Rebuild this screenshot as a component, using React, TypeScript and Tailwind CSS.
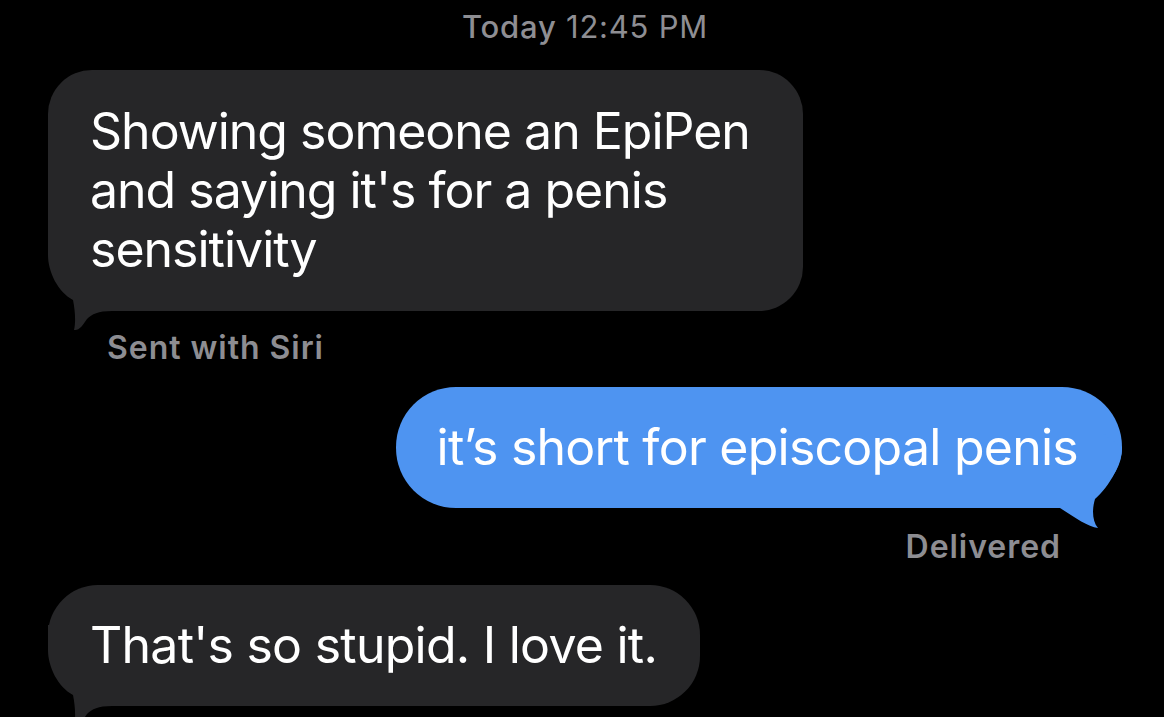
import React from "react";

function GrayTail() {
  return (
    <svg
      className="absolute left-[-8px] bottom-[-29px]"
      width="100"
      height="110"
      viewBox="0 0 100 110"
    >
      <path
        d="M 8 0 L 8 25 C 8 42, 18 62, 33 70 C 35 80, 36 92, 34 100 C 39 101, 43 95, 47 89 C 52 84, 58 81, 72 81 L 100 81 L 100 0 Z"
        fill="#262628"
      />
    </svg>
  );
}

function BlueTail() {
  return (
    <svg
      className="absolute right-[-18px] bottom-[-33px]"
      width="100"
      height="110"
      viewBox="0 0 100 110"
    >
      <path
        d="M 60 0 L 82 17 C 82 32, 70 55, 55 68 C 52 78, 52 90, 58 97 C 48 96, 36 87, 20 77 L 0 77 L 0 0 Z"
        fill="#4e94f1"
      />
    </svg>
  );
}

export default function App() {
  return (
    <div
      className="w-[1164px] h-[717px] overflow-hidden bg-black flex flex-col items-start pt-[9px]"
      style={{ fontFamily: "Inter, 'Noto Sans', sans-serif" }}
    >
      <div className="self-center h-[36px] leading-[36px] text-[31px] text-[#8e8e93] tracking-[0.025em] ml-[6px]">
        <span className="font-medium">Today</span> 12:45 PM
      </div>

      <div className="relative mt-[25px] ml-[48px] w-[755px] bg-[#262628] rounded-[44px] rounded-bl-[80px] pl-[42px] pr-[40px] py-[32px] text-white text-[50px] leading-[59px] tracking-[-0.02em]">
        <GrayTail />
        <div className="relative">
          Showing someone an EpiPen and saying it's for a penis sensitivity
        </div>
      </div>

      <div className="mt-[19px] ml-[107px] h-[36px] leading-[36px] text-[32px] font-semibold text-[#8d8d92] tracking-[0.03em]">
        Sent with Siri
      </div>

      <div className="relative self-end mt-[21px] mr-[42px] bg-[#4e94f1] rounded-[60px] rounded-br-[80px_60px] pl-[41px] pr-[44px] py-[31px] text-white text-[50px] leading-[59px] tracking-[-0.015em]">
        <BlueTail />
        <div className="relative whitespace-nowrap">it’s short for episcopal penis</div>
      </div>

      <div className="self-end mt-[21px] mr-[103px] h-[36px] leading-[36px] text-[32px] font-semibold text-[#8d8d92] tracking-[0.03em]">
        Delivered
      </div>

      <div className="relative mt-[20px] ml-[48px] bg-[#262628] rounded-[50px] rounded-bl-[70px] pl-[42px] pr-[43px] py-[31px] text-white text-[50px] leading-[59px] tracking-[-0.015em]">
        <GrayTail />
        <div className="relative whitespace-nowrap">That's so stupid. I love it.</div>
      </div>
    </div>
  );
}
